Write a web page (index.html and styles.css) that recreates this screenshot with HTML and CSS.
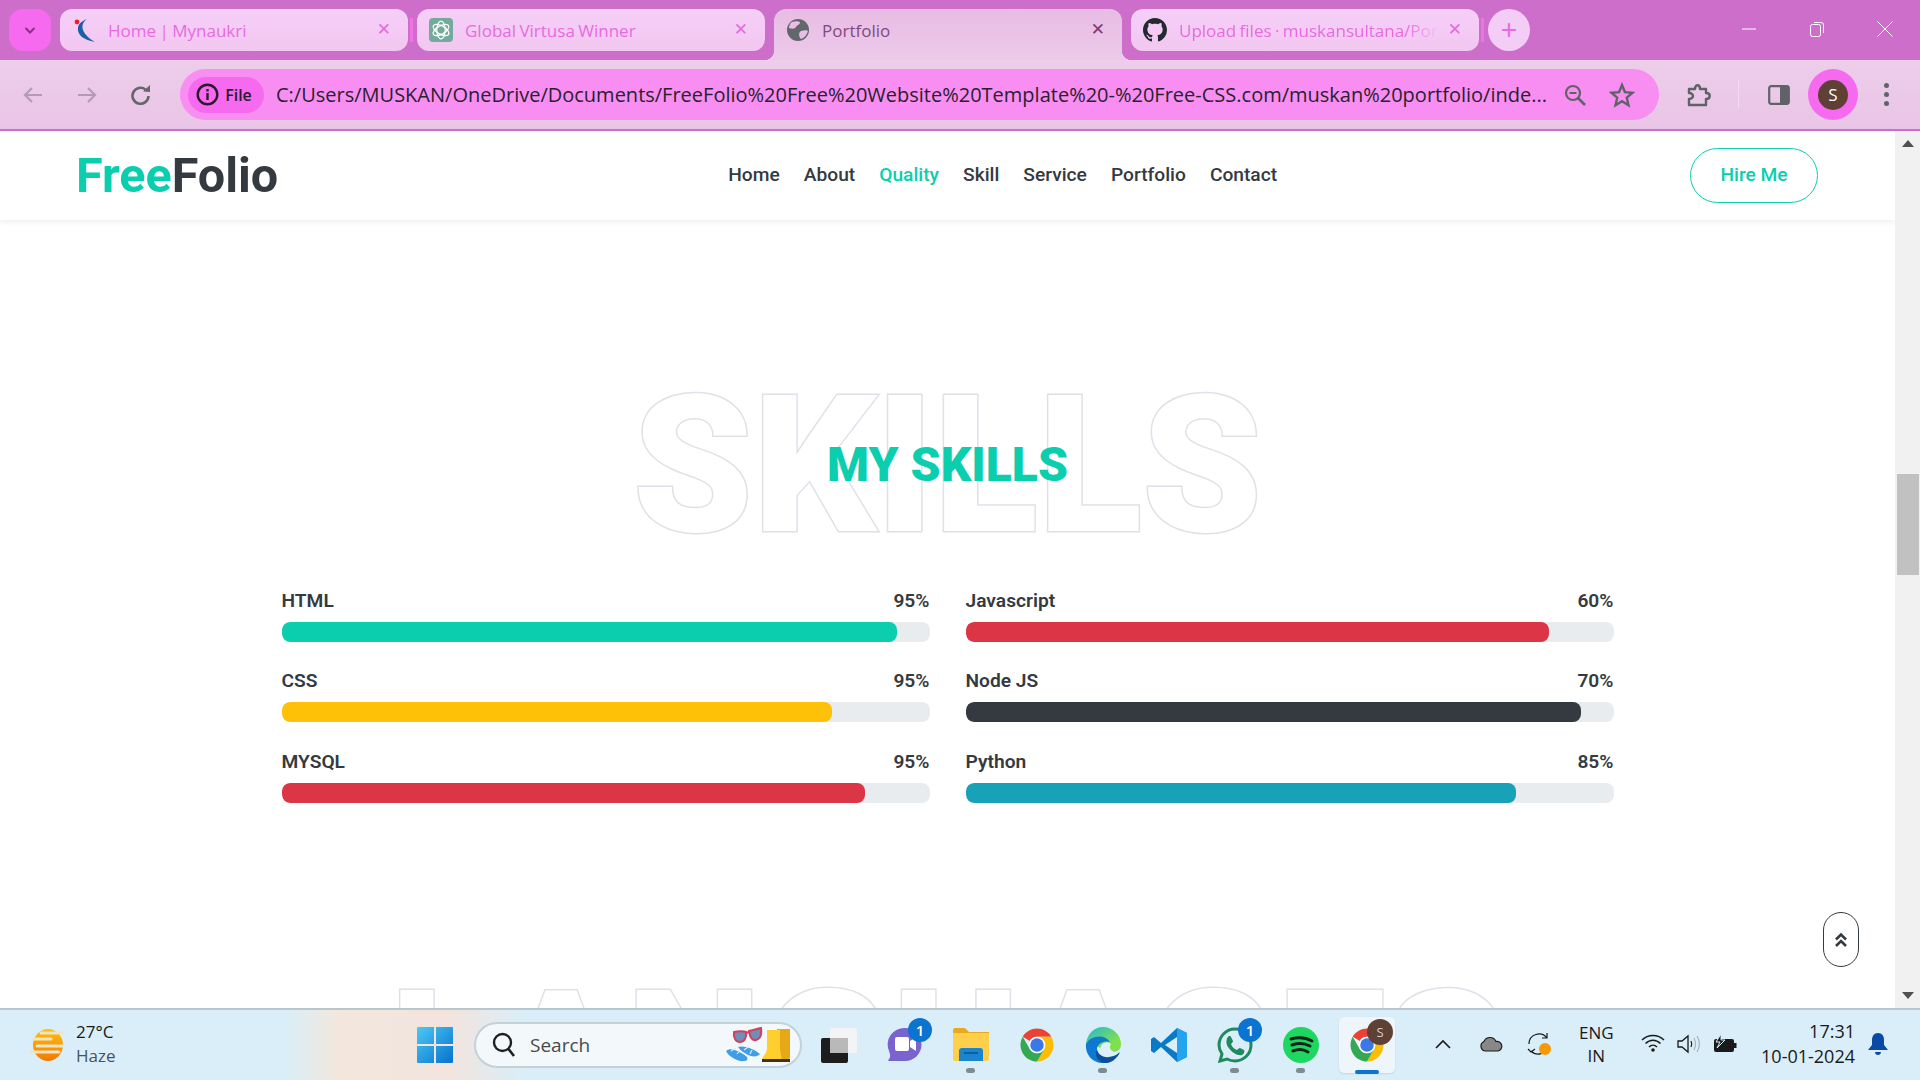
FILE: index.html
```html
<!DOCTYPE html>
<html lang="en">
<head>
    <meta charset="UTF-8">
    <meta name="viewport" content="width=device-width, initial-scale=1.0">
    <title>Portfolio</title>
    <link rel="stylesheet" href="styles.css">
</head>
<body>
    <svg class="defs" width="0" height="0">
        <symbol id="chrome-logo" viewBox="0 0 48 48">
            <path fill="#ea4335" d="M4.95 13A22 22 0 0 1 43.05 13H24A11 11 0 0 0 14.47 18.5Z"/>
            <path fill="#fbbc04" d="M43.05 13A22 22 0 0 1 24 46L33.53 29.5A11 11 0 0 0 24 13Z"/>
            <path fill="#34a853" d="M24 46A22 22 0 0 1 4.95 13L14.47 29.5A11 11 0 0 0 33.53 29.5Z"/>
            <circle cx="24" cy="24" r="11" fill="#fff"/>
            <circle cx="24" cy="24" r="9" fill="#3b78e7"/>
        </symbol>
    </svg>

    <!-- tab strip -->
    <div class="tabstrip">
        <button class="tab-search">
            <svg width="14" height="14" viewBox="0 0 14 14"><path d="M2.5 5L7 9.5L11.5 5" fill="none" stroke="#8a2f86" stroke-width="2"/></svg>
        </button>
        <div class="tab">
            <svg class="favicon" viewBox="0 0 24 24">
                <path fill="#1a5fa8" d="M15 1C8 6 8 15 23 24C12 22 5 17 6 10C6 6 10 3 15 1Z"/>
                <circle cx="5" cy="4" r="2.4" fill="#e8202a"/>
            </svg>
            <span class="tab-title">Home | Mynaukri</span>
            <span class="tab-close">&#10005;</span>
        </div>
        <span class="tab-sep"></span>
        <div class="tab">
            <svg class="favicon" viewBox="0 0 24 24">
                <rect width="24" height="24" rx="4" fill="#74aa9c"/>
                <g fill="none" stroke="#fff" stroke-width="1.2">
                    <ellipse cx="12" cy="12" rx="4.2" ry="8.8"/>
                    <ellipse cx="12" cy="12" rx="4.2" ry="8.8" transform="rotate(60 12 12)"/>
                    <ellipse cx="12" cy="12" rx="4.2" ry="8.8" transform="rotate(120 12 12)"/>
                </g>
            </svg>
            <span class="tab-title">Global Virtusa Winner</span>
            <span class="tab-close">&#10005;</span>
        </div>
        <div class="tab tab-active">
            <svg class="favicon" viewBox="0 0 24 24">
                <circle cx="12" cy="12" r="11" fill="#62676c"/>
                <path fill="#e9bde6" d="M6 4C9 3 12 3 14 4C14 7 11 7 10 9C9 11 6 11 3 10C3 8 4 5 6 4ZM15 13C18 12 21 12 22 13C21 17 18 20 15 21C13 19 12 15 15 13Z"/>
            </svg>
            <span class="tab-title">Portfolio</span>
            <span class="tab-close">&#10005;</span>
        </div>
        <div class="tab">
            <svg class="favicon" viewBox="0 0 16 16"><path fill="#24292f" d="M8 0C3.58 0 0 3.58 0 8c0 3.54 2.29 6.53 5.47 7.59.4.07.55-.17.55-.38 0-.19-.01-.82-.01-1.49-2.01.37-2.53-.49-2.69-.94-.09-.23-.48-.94-.82-1.13-.28-.15-.68-.52-.01-.53.63-.01 1.08.58 1.23.82.72 1.21 1.87.87 2.33.66.07-.52.28-.87.51-1.07-1.78-.2-3.64-.89-3.64-3.95 0-.87.31-1.59.82-2.15-.08-.2-.36-1.02.08-2.12 0 0 .67-.21 2.2.82.64-.18 1.32-.27 2-.27.68 0 1.36.09 2 .27 1.53-1.04 2.2-.82 2.2-.82.44 1.1.16 1.92.08 2.12.51.56.82 1.27.82 2.15 0 3.07-1.87 3.75-3.65 3.95.29.25.54.73.54 1.48 0 1.07-.01 1.93-.01 2.2 0 .21.15.46.55.38A8.013 8.013 0 0016 8c0-4.42-3.58-8-8-8z"/></svg>
            <span class="tab-title tab-fade">Upload files · muskansultana/Portfolio</span>
            <span class="tab-close">&#10005;</span>
        </div>
        <span class="tab-sep"></span>
        <button class="tab-new">+</button>
        <div class="window-controls">
            <svg width="16" height="16" viewBox="0 0 16 16"><path d="M1 8H15" stroke="#fff"/></svg>
            <svg width="16" height="18" viewBox="0 0 16 18"><rect x="1.5" y="4.5" width="10" height="12" rx="2" fill="none" stroke="#fff"/><path d="M5 2.5H12A2.5 2.5 0 0 1 14.5 5V13" fill="none" stroke="#fff"/></svg>
            <svg width="16" height="16" viewBox="0 0 16 16"><path d="M0.5 0.5L15.5 15.5M15.5 0.5L0.5 15.5" stroke="#fff"/></svg>
        </div>
    </div>

    <!-- toolbar -->
    <div class="toolbar">
        <div class="nav-buttons">
            <svg width="24" height="24" viewBox="0 0 24 24"><path d="M21 12H4M11 5L4 12L11 19" fill="none" stroke="#b49bb3" stroke-width="2.2"/></svg>
            <svg width="24" height="24" viewBox="0 0 24 24"><path d="M3 12H20M13 5L20 12L13 19" fill="none" stroke="#b49bb3" stroke-width="2.2"/></svg>
            <svg width="24" height="24" viewBox="0 0 24 24"><path d="M19.5 13A8 8 0 1 1 16.5 6.5" fill="none" stroke="#63666a" stroke-width="2.6"/><path d="M14 8.5L21 9V2Z" fill="#63666a"/></svg>
        </div>
        <div class="omnibox">
            <div class="site-chip">
                <svg width="23" height="23" viewBox="0 0 23 23"><circle cx="11.5" cy="11.5" r="9.8" fill="none" stroke="#2b1a2c" stroke-width="2.4"/><path d="M11.5 10V17M11.5 6V8.5" stroke="#2b1a2c" stroke-width="2.4"/></svg>
                <span>File</span>
            </div>
            <span class="url">C:/Users/MUSKAN/OneDrive/Documents/FreeFolio%20Free%20Website%20Template%20-%20Free-CSS.com/muskan%20portfolio/inde...</span>
            <svg class="omni-icon" width="24" height="24" viewBox="0 0 24 24"><circle cx="10" cy="10" r="7" fill="none" stroke="#5f6368" stroke-width="2.2"/><path d="M15 15L22 22" stroke="#5f6368" stroke-width="2.6"/><path d="M6.5 10H13.5" stroke="#5f6368" stroke-width="2"/></svg>
            <svg class="omni-icon star" width="26" height="26" viewBox="0 0 24 24"><path d="M12 2.8L14.7 9.3L21.7 9.9L16.4 14.5L18 21.4L12 17.7L6 21.4L7.6 14.5L2.3 9.9L9.3 9.3Z" fill="none" stroke="#5f6368" stroke-width="2.2"/></svg>
        </div>
        <svg class="tool-icon" width="26" height="26" viewBox="0 0 26 26"><path d="M3 7H9C9 2 14 2 14 7H20V11C25 11 25 17 20 17V23H3V17C6 17 7 15 7 14C7 13 6 11 3 11Z" fill="none" stroke="#5f6368" stroke-width="2.4" stroke-linejoin="round"/></svg>
        <span class="tool-sep"></span>
        <svg class="tool-icon panel-icon" width="22" height="22" viewBox="0 0 22 22"><rect x="1.2" y="2.2" width="19.6" height="17.6" rx="2" fill="none" stroke="#5f6368" stroke-width="2.2"/><rect x="12" y="2" width="9" height="18" fill="#5f6368"/></svg>
        <div class="profile"><span>S</span></div>
        <div class="kebab"><i></i><i></i><i></i></div>
    </div>

    <!-- page in the browser -->
    <div class="page">
        <div class="content">
            <nav class="navbar">
                <a class="logo"><span class="accent">Free</span>Folio</a>
                <div class="nav-links">
                    <a>Home</a>
                    <a>About</a>
                    <a class="active">Quality</a>
                    <a>Skill</a>
                    <a>Service</a>
                    <a>Portfolio</a>
                    <a>Contact</a>
                </div>
                <a class="hire-btn">Hire Me</a>
            </nav>

            <section class="skills">
                <div class="section-title">
                    <div class="title-back">SKILLS</div>
                    <h2 class="title-front">MY SKILLS</h2>
                </div>
                <div class="skill-grid">
                    <div class="skill-col">
                        <div class="skill">
                            <div class="skill-head"><span>HTML</span><span>95%</span></div>
                            <div class="track"><div class="fill teal" style="width: 95%"></div></div>
                        </div>
                        <div class="skill">
                            <div class="skill-head"><span>CSS</span><span>95%</span></div>
                            <div class="track"><div class="fill yellow" style="width: 85%"></div></div>
                        </div>
                        <div class="skill">
                            <div class="skill-head"><span>MYSQL</span><span>95%</span></div>
                            <div class="track"><div class="fill red" style="width: 90%"></div></div>
                        </div>
                    </div>
                    <div class="skill-col">
                        <div class="skill">
                            <div class="skill-head"><span>Javascript</span><span>60%</span></div>
                            <div class="track"><div class="fill red" style="width: 90%"></div></div>
                        </div>
                        <div class="skill">
                            <div class="skill-head"><span>Node JS</span><span>70%</span></div>
                            <div class="track"><div class="fill dark" style="width: 95%"></div></div>
                        </div>
                        <div class="skill">
                            <div class="skill-head"><span>Python</span><span>85%</span></div>
                            <div class="track"><div class="fill cyan" style="width: 85%"></div></div>
                        </div>
                    </div>
                </div>
            </section>

            <section class="languages">
                <div class="title-back">LANGUAGES</div>
            </section>

            <a class="back-top">
                <svg width="14" height="16" viewBox="0 0 14 16"><path d="M2 7.5L7 2.5L12 7.5M2 14L7 9L12 14" fill="none" stroke="#343a40" stroke-width="2.6"/></svg>
            </a>
        </div>
        <div class="scrollbar">
            <span class="arrow-up"></span>
            <span class="thumb"></span>
            <span class="arrow-down"></span>
        </div>
    </div>

    <!-- windows taskbar -->
    <div class="taskbar">
        <div class="weather">
            <svg width="36" height="34" viewBox="0 0 36 34">
                <defs><linearGradient id="sun" x1="0" y1="0" x2="0" y2="1"><stop offset="0" stop-color="#fdc010"/><stop offset="1" stop-color="#f07a06"/></linearGradient></defs>
                <ellipse cx="19" cy="17" rx="15" ry="16" fill="url(#sun)"/>
                <path d="M12 5H34M4 11H22M8 18H34M2 24H30" stroke="#f3e3bf" stroke-width="3" stroke-linecap="round"/>
            </svg>
            <div class="weather-text">
                <span>27°C</span>
                <span class="muted">Haze</span>
            </div>
        </div>

        <svg class="start" width="36" height="36" viewBox="0 0 36 36">
            <defs><linearGradient id="win" x1="0" y1="0" x2="1" y2="1"><stop offset="0" stop-color="#4cc9f5"/><stop offset="1" stop-color="#0672cc"/></linearGradient></defs>
            <path fill="url(#win)" d="M1 0H17V17H0V1A1 1 0 0 1 1 0ZM19 0H35A1 1 0 0 1 36 1V17H19ZM0 19H17V36H1A1 1 0 0 1 0 35ZM19 19H36V35A1 1 0 0 1 35 36H19Z"/>
        </svg>

        <div class="search">
            <svg width="24" height="26" viewBox="0 0 24 26"><circle cx="10.5" cy="10.5" r="8.5" fill="none" stroke="#1f1f1f" stroke-width="2.4"/><path d="M16.5 17L22 24" stroke="#1f1f1f" stroke-width="2.6"/></svg>
            <span>Search</span>
            <svg class="search-art" width="64" height="36" viewBox="0 0 64 36">
                <!-- sunglasses -->
                <g fill="#6f8fb8" stroke="#d2405f" stroke-width="2">
                    <path d="M8 5C12 4 18 4 20 5C21 11 18 15 14 15C10 15 7 11 8 5Z"/>
                    <path d="M23 4C26 3 32 2 35 1C36 8 34 12 30 13C26 14 24 10 23 4Z"/>
                    <path d="M20 6L23 5" fill="none"/>
                </g>
                <!-- flip flops -->
                <path fill="#3f9ee6" d="M0 24C5 20 12 24 20 29C23 32 21 34 18 34C12 35 3 30 0 24ZM12 20C18 18 28 22 34 27C32 30 26 30 22 28C18 26 14 23 12 20Z"/>
                <path fill="none" stroke="#d5ecff" stroke-width="1.2" d="M5 24L10 21M11 27L14 23M18 23L22 20M24 27L26 23"/>
                <!-- boots -->
                <path fill="#e6a814" d="M51 2H64V30C64 33 60 33 56 33H50Z"/>
                <path fill="#ffcf2e" d="M41 3H54V19C54 24 55 28 56 33H36C36 29 41 27 41 21Z"/>
                <path fill="#3d3220" d="M36 32H64V35H36Z"/>
            </svg>
        </div>

        <div class="apps">
            <svg class="app" width="36" height="36" viewBox="0 0 36 36">
                <rect x="0" y="11" width="27" height="25" rx="2" fill="#1d1d1d"/>
                <rect x="9" y="1" width="27" height="25" rx="2" fill="#f4f4f4" opacity=".9"/>
                <rect x="9" y="11" width="18" height="15" fill="#b9b9b9"/>
            </svg>
            <div class="app-slot">
                <svg width="36" height="36" viewBox="0 0 36 36">
                    <path fill="#7a63cf" d="M18 1A16.5 16.5 0 0 1 18 34H2C1 34 1 33 2 32C4 30 3 27 2 24A16.5 16.5 0 0 1 18 1Z"/>
                    <rect x="8" y="10" width="14" height="14" rx="2" fill="#fff"/>
                    <path d="M23 14L29 10V24L23 20Z" fill="#fff"/>
                </svg>
                <span class="badge">1</span>
            </div>
            <div class="app-slot">
                <svg width="36" height="34" viewBox="0 0 36 34">
                    <path fill="#e9a91c" d="M0 3A2 2 0 0 1 2 1H12L16 5H36V10H0Z"/>
                    <path fill="#fdcf4b" d="M0 6H36V32A2 2 0 0 1 34 34H2A2 2 0 0 1 0 32Z"/>
                    <path fill="#1b84cf" d="M6 24A3 3 0 0 1 9 21H27A3 3 0 0 1 30 24V34H6Z"/>
                    <path d="M11 26H25" stroke="#0d5f9d" stroke-width="2"/>
                </svg>
                <span class="dot"></span>
            </div>
            <svg class="app" width="36" height="36" viewBox="0 0 48 48"><use href="#chrome-logo"/></svg>
            <div class="app-slot">
                <svg width="36" height="36" viewBox="0 0 36 36">
                    <defs>
                        <linearGradient id="edge" x1="0" y1="0" x2="1" y2="1"><stop offset="0" stop-color="#22b6dc"/><stop offset=".7" stop-color="#7ee04b"/></linearGradient>
                    </defs>
                    <path fill="url(#edge)" d="M1 17C2 7 9 0 18 0C28 0 36 8 36 17C36 23 32 25 28 25C20 25 14 18 1 17Z"/>
                    <path fill="#0f78cf" d="M1 17C5 9 19 6 25 15C18 13 11 17 12 24C13 31 21 35 29 33C25 36 21 36 18 36C8 36 0 28 1 17Z"/>
                    <path fill="#0b4e9a" d="M12 22C13 30 24 34 35 25C32 32 26 36 20 36C14 35 9 30 12 22Z"/>
                    <path fill="#dceffa" d="M15 23C15 16 22 13 26 17C24 20 25 24 30 25C33 25 35 24 36 21C35 24 33 26 31 28C24 30 16 29 15 23Z"/>
                </svg>
                <span class="dot"></span>
            </div>
            <svg class="app" width="36" height="36" viewBox="0 0 36 36">
                <path fill="#0a79c8" d="M26 1L36 6V30L26 35L10 20L3 26L0 24V12L3 10L10 16Z"/>
                <path fill="#24a4ee" d="M26 1L36 6V30L26 35Z"/>
                <path fill="#dbeefa" d="M26 10L14 18L26 26Z"/>
            </svg>
            <div class="app-slot">
                <svg width="36" height="36" viewBox="0 0 36 36">
                    <path fill="none" stroke="#1f8a5b" stroke-width="3" d="M18 2A16 16 0 0 1 18 34C15 34 12 33 10 32L3 34L5 27C3 24 2 21 2 18A16 16 0 0 1 18 2Z"/>
                    <path fill="#1f8a5b" d="M12 9C13 9 14 9 14 10L16 14C16 15 15 16 14 17C15 20 17 22 20 23C21 22 22 21 23 21L27 23C28 24 27 27 25 28C21 29 15 26 11 20C8 15 10 10 12 9Z"/>
                </svg>
                <span class="badge">1</span>
                <span class="dot"></span>
            </div>
            <div class="app-slot">
                <svg width="36" height="36" viewBox="0 0 36 36">
                    <circle cx="18" cy="18" r="18" fill="#1ed760"/>
                    <path d="M8 12C15 10 22 10 29 14M9 18C15 16 21 16 27 19M10 24C15 22 20 22 25 25" fill="none" stroke="#14241a" stroke-width="3" stroke-linecap="round"/>
                </svg>
                <span class="dot"></span>
            </div>
            <div class="app-slot app-current">
                <svg width="36" height="36" viewBox="0 0 48 48"><use href="#chrome-logo"/></svg>
                <span class="avatar-badge">S</span>
                <span class="current-bar"></span>
            </div>
        </div>

        <div class="tray">
            <svg width="16" height="10" viewBox="0 0 16 10"><path d="M1 9L8 2L15 9" fill="none" stroke="#1a1a1a" stroke-width="1.6"/></svg>
            <svg width="24" height="16" viewBox="0 0 24 16"><path d="M6 15A5 5 0 0 1 5 5.5A6.5 6.5 0 0 1 17 5.5A4.7 4.7 0 0 1 19 15Z" fill="#888" stroke="#1a1a1a" stroke-width="1.2"/></svg>
            <svg width="26" height="26" viewBox="0 0 26 26">
                <path d="M3 13A10 10 0 0 1 21 7M21 2V7H16M22 15A10 10 0 0 1 5 20M2 18L5 21L9 18" fill="none" stroke="#1a1a1a" stroke-width="1.2"/>
                <circle cx="19" cy="18" r="6" fill="#f59a05"/>
            </svg>
            <div class="lang"><span>ENG</span><span>IN</span></div>
            <div class="status-icons">
                <svg width="24" height="18" viewBox="0 0 24 18"><path d="M1 6C7 0 17 0 23 6M4.5 9.5C9 5 15 5 19.5 9.5M8 13C10.5 10.5 13.5 10.5 16 13" fill="none" stroke="#1a1a1a" stroke-width="1.5"/><circle cx="12" cy="16" r="1.8" fill="#1a1a1a"/></svg>
                <svg width="24" height="20" viewBox="0 0 24 20"><path d="M1 7H5L11 2V18L5 13H1Z" fill="none" stroke="#1a1a1a" stroke-width="1.3"/><path d="M14 7C15 9 15 11 14 13" fill="none" stroke="#1a1a1a" stroke-width="1.2"/><path d="M17 4C19 8 19 12 17 16M20 2C23 7 23 13 20 18" fill="none" stroke="#a9b3b8" stroke-width="1.2"/></svg>
                <svg width="24" height="20" viewBox="0 0 24 20"><rect x="1" y="5" width="20" height="13" rx="2" fill="#1a1a1a"/><rect x="21" y="9" width="2.5" height="5" fill="#1a1a1a"/><path d="M8 0L3 8H7L4 14L12 6H8Z" fill="#1a1a1a" stroke="#d9eef8" stroke-width="1"/></svg>
            </div>
            <div class="clock"><span>17:31</span><span>10-01-2024</span></div>
            <svg width="20" height="24" viewBox="0 0 20 24"><path fill="#0a4aa6" d="M10 1C14 1 16 4 16 8V13L20 18H0L4 13V8C4 4 6 1 10 1ZM7 20H13C13 24 7 24 7 20Z"/></svg>
        </div>
    </div>
</body>
</html>
```

FILE: styles.css
```css
* {
    box-sizing: border-box;
}
html, body {
    margin: 0;
    height: 100%;
    overflow: hidden;
}
body {
    font-family: Roboto, sans-serif;
    color: #343a40;
    background: #fff;
}
.defs {
    position: absolute;
}
button {
    border: none;
    padding: 0;
    font: inherit;
}

/* tab strip */
.tabstrip {
    height: 60px;
    background: #cd6fca;
    display: flex;
    align-items: flex-start;
    padding: 9px 0 0 9px;
    font-family: "Open Sans", sans-serif;
    font-size: 17px;
}
.tab-search {
    width: 42px;
    height: 42px;
    border-radius: 14px;
    background: #f66af0;
    margin-right: 9px;
    display: flex;
    align-items: center;
    justify-content: center;
}
.tab {
    width: 348px;
    height: 42px;
    border-radius: 12px;
    background: linear-gradient(#f5cff8, #f2c7f0);
    display: flex;
    align-items: center;
    padding: 0 17px 0 12px;
    flex-shrink: 0;
    margin-right: 9px;
    color: #e76bdf;
    word-spacing: -1px;
}
.tab + .tab-sep {
    margin-left: -7px;
    margin-right: 4px;
}
.tab-sep {
    width: 3px;
    height: 24px;
    margin-top: 9px;
    background: #ef71e8;
    flex-shrink: 0;
}
.favicon {
    width: 24px;
    height: 24px;
    flex-shrink: 0;
    margin-right: 12px;
}
.tab-title {
    flex: 1;
    white-space: nowrap;
    overflow: hidden;
}
.tab-fade {
    -webkit-mask-image: linear-gradient(90deg, #000 86%, transparent);
    mask-image: linear-gradient(90deg, #000 86%, transparent);
}
.tab-close {
    font-size: 17px;
    margin-left: 8px;
    font-family: "DejaVu Sans", sans-serif;
    font-weight: bold;
    margin-top: -2px;
}
.tab-active {
    height: 51px;
    background: linear-gradient(#e8bce5, #ecc9e9);
    border-radius: 12px 12px 0 0;
    position: relative;
    padding-bottom: 9px;
}
.tab-active .tab-title {
    color: #7f4a7d;
}
.tab-active .tab-close {
    color: #7b3a78;
}
.tab-active::before,
.tab-active::after {
    content: "";
    position: absolute;
    bottom: 0;
    width: 10px;
    height: 10px;
    background: radial-gradient(circle at 0 0, transparent 10px, #ecc9e9 10.5px);
}
.tab-active::before {
    left: -10px;
}
.tab-active::after {
    right: -10px;
    background: radial-gradient(circle at 100% 0, transparent 10px, #ecc9e9 10.5px);
}
.tab-new {
    width: 42px;
    height: 42px;
    border-radius: 50%;
    background: #f4cdf6;
    color: #e76bdf;
    font-size: 28px;
    line-height: 38px;
    font-family: "Liberation Sans", sans-serif;
}
.window-controls {
    margin-left: auto;
    display: flex;
    align-items: center;
    gap: 52px;
    padding: 11px 27px 0 0;
}

/* toolbar */
.toolbar {
    height: 71px;
    background: linear-gradient(#edcdea, #e9c4e6);
    border-bottom: 2px solid #cd6fca;
    display: flex;
    align-items: center;
    padding-left: 21px;
}
.nav-buttons {
    display: flex;
    gap: 30px;
    width: 159px;
}
.omnibox {
    width: 1479px;
    height: 51px;
    border-radius: 26px;
    background: #f98ef2;
    display: flex;
    align-items: center;
    padding: 0 20px 0 8px;
}
.site-chip {
    width: 76px;
    height: 36px;
    border-radius: 18px;
    background: #f66af0;
    display: flex;
    align-items: center;
    justify-content: center;
    gap: 6px;
    padding-right: 4px;
    font-family: "Open Sans", sans-serif;
    font-weight: 600;
    font-size: 16px;
    color: #2b1a2c;
    margin-right: 12px;
}
.url {
    font-family: "Open Sans", sans-serif;
    font-size: 20px;
    color: #2a2130;
    white-space: nowrap;
    overflow: hidden;
    width: 1270px;
    flex-shrink: 0;
}
.omni-icon {
    margin-left: 17px;
}
.star {
    margin-left: 22px;
}
.tool-icon {
    margin-left: 27px;
}
.tool-sep {
    width: 1px;
    height: 28px;
    background: #f3dcf2;
    margin-left: 26px;
}
.panel-icon {
    margin-left: 29px;
}
.profile {
    width: 50px;
    height: 51px;
    border-radius: 50%;
    background: #f66af0;
    margin-left: 18px;
    display: flex;
    align-items: center;
    justify-content: center;
}
.profile span {
    width: 30px;
    height: 30px;
    border-radius: 50%;
    background: #5e4034;
    color: #fff;
    font-size: 17px;
    line-height: 30px;
    text-align: center;
    font-family: "Open Sans", sans-serif;
}
.kebab {
    margin-left: 26px;
    display: flex;
    flex-direction: column;
    gap: 4px;
}
.kebab i {
    width: 5px;
    height: 5px;
    border-radius: 50%;
    background: #5f6368;
}

/* page */
.page {
    height: 877px;
    display: flex;
    background: #fff;
}
.content {
    flex: 1;
    overflow: hidden;
    position: relative;
}
.navbar {
    height: 89px;
    display: flex;
    align-items: center;
    padding-left: 76px;
    box-shadow: 0 2px 6px rgba(0, 0, 0, .07);
    position: relative;
}
.logo {
    font-size: 48.5px;
    font-weight: 700;
    color: #343a40;
    line-height: 1;
    margin-top: 1px;
}
.accent {
    color: #0bceaf;
}
.nav-links {
    display: flex;
    gap: 24px;
    margin-left: 450px;
    font-size: 19.2px;
    font-weight: 460;
    margin-top: -2px;
}
.active {
    color: #0bceaf;
}
.hire-btn {
    position: absolute;
    left: 1690px;
    top: 17px;
    width: 128px;
    height: 55px;
    border: 1.5px solid #0bceaf;
    border-radius: 28px;
    color: #0bceaf;
    font-size: 19.2px;
    font-weight: 460;
    display: flex;
    align-items: center;
    justify-content: center;
    padding-bottom: 2px;
}
.skills {
    padding-top: 150px;
}
.section-title {
    position: relative;
    text-align: center;
    margin-bottom: 25px;
}
.title-back {
    font-size: 192px;
    line-height: 1;
    font-weight: 900;
    color: #fff;
    -webkit-text-stroke: 3px #dfe1e8;
    paint-order: stroke fill;
    text-align: center;
}
.title-front {
    position: absolute;
    left: 0;
    right: 0;
    top: 71px;
    margin: 0;
    font-size: 48px;
    line-height: 48px;
    font-weight: 900;
    color: #0bceaf;
}
.skill-grid {
    width: 1332px;
    margin: 0 auto;
    display: grid;
    grid-template-columns: 1fr 1fr;
    gap: 36px;
}
.skill {
    margin-bottom: 25.3px;
}
.skill-head {
    display: flex;
    justify-content: space-between;
    font-size: 19.2px;
    font-weight: 600;
    line-height: 27px;
    margin-bottom: 8px;
}
.track {
    height: 20px;
    border-radius: 8px;
    background: #e9ecef;
    overflow: hidden;
}
.fill {
    height: 100%;
    border-radius: 8px;
}
.teal { background: #0bceaf; }
.yellow { background: #ffc107; }
.red { background: #dc3545; }
.dark { background: #343a40; }
.cyan { background: #17a2b8; }
.languages {
    padding-top: 137px;
}
.back-top {
    position: absolute;
    left: 1823px;
    top: 781px;
    width: 36px;
    height: 55px;
    border: 1px solid #343a40;
    border-radius: 18px;
    display: flex;
    align-items: center;
    justify-content: center;
}

/* scrollbar */
.scrollbar {
    width: 25px;
    background: #f1f1f1;
    display: flex;
    flex-direction: column;
    align-items: center;
    position: relative;
}
.arrow-up {
    margin-top: 9px;
    border: 6px solid transparent;
    border-top: none;
    border-bottom: 7px solid #505050;
}
.thumb {
    width: 22px;
    height: 101px;
    background: #c1c1c1;
    position: absolute;
    top: 343px;
}
.arrow-down {
    margin-top: auto;
    margin-bottom: 9px;
    border: 6px solid transparent;
    border-bottom: none;
    border-top: 7px solid #505050;
}

/* taskbar */
.taskbar {
    height: 72px;
    border-top: 2px solid #b8c6cd;
    background:
        linear-gradient(90deg, transparent 285px, #f3e7dc 340px, #f2e4de 450px, transparent 525px),
        #d9eef8;
    position: relative;
    display: flex;
    align-items: center;
    padding-bottom: 1px;
    font-family: "Open Sans", sans-serif;
    color: #1a1a1a;
}
.weather {
    display: flex;
    align-items: center;
    gap: 11px;
    padding-left: 29px;
    width: 417px;
    font-size: 17px;
    flex-shrink: 0;
}
.weather-text {
    display: flex;
    flex-direction: column;
    line-height: 24px;
    margin-top: -2px;
}
.muted {
    color: #4b5358;
}
.start {
    flex-shrink: 0;
}
.search {
    width: 328px;
    height: 46px;
    margin-left: 21px;
    border-radius: 23px;
    background: #f3f8fb;
    border: 2px solid #c3d2d9;
    display: flex;
    align-items: center;
    padding-left: 16px;
    gap: 14px;
    font-size: 19px;
    color: #4a4a4a;
    flex-shrink: 0;
}
.search-art {
    margin-left: auto;
    margin-right: 10px;
}
.apps {
    display: flex;
    align-items: center;
    margin-left: 19px;
    gap: 30px;
    flex-shrink: 0;
}
.app,
.app-slot {
    display: block;
    flex-shrink: 0;
}
.app-slot {
    width: 36px;
    height: 36px;
    position: relative;
}
.app-slot svg {
    display: block;
}
.badge {
    position: absolute;
    right: -9px;
    top: -9px;
    width: 24px;
    height: 24px;
    border-radius: 50%;
    background: #0b73d0;
    color: #fff;
    font-size: 15px;
    font-weight: 600;
    line-height: 24px;
    text-align: center;
}
.dot {
    position: absolute;
    left: 13px;
    bottom: -10px;
    width: 9px;
    height: 5px;
    border-radius: 3px;
    background: #7d8b92;
}
.app-current::before {
    content: "";
    position: absolute;
    left: -10px;
    top: -10px;
    width: 56px;
    height: 56px;
    border-radius: 5px;
    background: #eef6fc;
    box-shadow: 0 1px 2px rgba(0, 0, 0, .1);
}
.app-current svg {
    position: relative;
}
.avatar-badge {
    position: absolute;
    left: 18px;
    top: -8px;
    width: 26px;
    height: 26px;
    border-radius: 50%;
    background: #5e4034;
    color: #d9cfca;
    font-size: 13px;
    line-height: 26px;
    text-align: center;
}
.current-bar {
    position: absolute;
    left: 6px;
    bottom: -11px;
    width: 24px;
    height: 4px;
    border-radius: 2px;
    background: #0b73d0;
}
.tray {
    position: absolute;
    left: 1435px;
    top: 0;
    bottom: 2px;
    right: 32px;
    display: flex;
    align-items: center;
}
.tray > svg:nth-child(2) {
    margin-left: 28px;
}
.tray > svg:nth-child(3) {
    margin-left: 23px;
}
.lang {
    display: flex;
    flex-direction: column;
    align-items: center;
    line-height: 23px;
    font-size: 17px;
    margin-left: 27px;
}
.status-icons {
    display: flex;
    gap: 12px;
    margin-left: 27px;
}
.clock {
    display: flex;
    flex-direction: column;
    align-items: flex-end;
    line-height: 25px;
    font-size: 18px;
    margin-left: auto;
    margin-right: 13px;
    margin-top: -1px;
}
```
